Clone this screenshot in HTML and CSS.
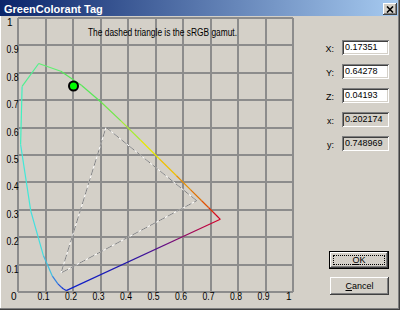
FILE: index.html
```html
<!DOCTYPE html>
<html lang="en">
<head>
    <meta charset="UTF-8">
    <title>GreenColorant Tag</title>
    <link rel="stylesheet" href="styles.css">
</head>
<body>
    <div class="window">
        <div class="titlebar">
            <span class="title">GreenColorant Tag</span>
            <span class="close">
                <svg width="8" height="7" viewBox="0 0 8 7"><path d="M1 0.5L7 6.5M7 0.5L1 6.5" stroke="#000" stroke-width="1.6"/></svg>
            </span>
        </div>
        <div class="client">
            <svg class="chart" viewBox="0 16 300 292" xmlns="http://www.w3.org/2000/svg">
                <defs>
                    <linearGradient id="purple" gradientUnits="userSpaceOnUse" x1="66" y1="290" x2="220" y2="219">
                        <stop offset="0" stop-color="#0a20d0"/>
                        <stop offset="0.4" stop-color="#2418a8"/>
                        <stop offset="0.6" stop-color="#58108c"/>
                        <stop offset="0.82" stop-color="#a00858"/>
                        <stop offset="1" stop-color="#d80028"/>
                    </linearGradient>
                </defs>

                <!-- grid -->
                <path class="grid" d="M18 18V292M45.5 18V292M73 18V292M100.5 18V292M128 18V292M155.5 18V292M183 18V292M210.5 18V292M238 18V292M265.5 18V292M293 18V292M18 18H293M18 45.4H293M18 72.8H293M18 100.2H293M18 127.6H293M18 155H293M18 182.4H293M18 209.8H293M18 237.2H293M18 264.6H293M18 292H293"/>

                <!-- axis labels -->
                <g class="axis">
                    <text x="7" y="26">1</text>
                    <text x="6.5" y="53.4" textLength="12" lengthAdjust="spacingAndGlyphs">0.9</text>
                    <text x="6.5" y="80.8" textLength="12" lengthAdjust="spacingAndGlyphs">0.8</text>
                    <text x="6.5" y="108.2" textLength="12" lengthAdjust="spacingAndGlyphs">0.7</text>
                    <text x="6.5" y="135.6" textLength="12" lengthAdjust="spacingAndGlyphs">0.6</text>
                    <text x="6.5" y="163" textLength="12" lengthAdjust="spacingAndGlyphs">0.5</text>
                    <text x="6.5" y="190.4" textLength="12" lengthAdjust="spacingAndGlyphs">0.4</text>
                    <text x="6.5" y="217.8" textLength="12" lengthAdjust="spacingAndGlyphs">0.3</text>
                    <text x="6.5" y="245.2" textLength="12" lengthAdjust="spacingAndGlyphs">0.2</text>
                    <text x="6.5" y="272.6" textLength="12" lengthAdjust="spacingAndGlyphs">0.1</text>
                    <text x="11" y="299.5">0</text>
                    <text x="37.5" y="299.5" textLength="12" lengthAdjust="spacingAndGlyphs">0.1</text>
                    <text x="65" y="299.5" textLength="12" lengthAdjust="spacingAndGlyphs">0.2</text>
                    <text x="92.5" y="299.5" textLength="12" lengthAdjust="spacingAndGlyphs">0.3</text>
                    <text x="120" y="299.5" textLength="12" lengthAdjust="spacingAndGlyphs">0.4</text>
                    <text x="147.5" y="299.5" textLength="12" lengthAdjust="spacingAndGlyphs">0.5</text>
                    <text x="175" y="299.5" textLength="12" lengthAdjust="spacingAndGlyphs">0.6</text>
                    <text x="202.5" y="299.5" textLength="12" lengthAdjust="spacingAndGlyphs">0.7</text>
                    <text x="230" y="299.5" textLength="12" lengthAdjust="spacingAndGlyphs">0.8</text>
                    <text x="257.5" y="299.5" textLength="12" lengthAdjust="spacingAndGlyphs">0.9</text>
                    <text x="286" y="299.5">1</text>
                </g>

                <text class="caption" x="88" y="36" textLength="149" lengthAdjust="spacingAndGlyphs">The dashed triangle is the sRGB gamut.</text>

                <!-- sRGB gamut -->
                <polygon class="gamut-base" points="196.7,200.7 106,127.3 61,273"/>
                <polygon class="gamut-dash" points="196.7,200.7 106,127.3 61,273"/>

                <!-- spectral locus, 10nm steps -->
                <g class="locus">
                    <line x1="66.2" y1="290.6" x2="63.5" y2="289" stroke="#1030d0"/>
                    <line x1="63.5" y1="289" x2="61.4" y2="287.2" stroke="#1030d0"/>
                    <line x1="61.4" y1="287.2" x2="57.9" y2="283.9" stroke="#2050d8"/>
                    <line x1="57.9" y1="283.9" x2="52.4" y2="276.2" stroke="#3080e0"/>
                    <line x1="52.4" y1="276.2" x2="43.4" y2="255.6" stroke="#40c0e0"/>
                    <line x1="43.4" y1="255.6" x2="30.8" y2="211.2" stroke="#40e0e0"/>
                    <line x1="30.8" y1="211.2" x2="20.6" y2="144.5" stroke="#40e8d8"/>
                    <line x1="20.6" y1="144.5" x2="22.1" y2="86.4" stroke="#40f0c0"/>
                    <line x1="22.1" y1="86.4" x2="38.7" y2="63.5" stroke="#50f090"/>
                    <line x1="38.7" y1="63.5" x2="60.8" y2="71.2" stroke="#60f070"/>
                    <line x1="60.8" y1="71.2" x2="81.4" y2="85.3" stroke="#58e858"/>
                    <line x1="81.4" y1="85.3" x2="101.2" y2="102.3" stroke="#58e858"/>
                    <line x1="101.2" y1="102.3" x2="120.9" y2="120.9" stroke="#70e848"/>
                    <line x1="120.9" y1="120.9" x2="140.4" y2="140" stroke="#a8ec30"/>
                    <line x1="140.4" y1="140" x2="159.2" y2="158.7" stroke="#e8e800"/>
                    <line x1="159.2" y1="158.7" x2="176.5" y2="175.8" stroke="#f0c000"/>
                    <line x1="176.5" y1="175.8" x2="190.7" y2="189.9" stroke="#e89000"/>
                    <line x1="190.7" y1="189.9" x2="201.4" y2="200.5" stroke="#e07000"/>
                    <line x1="201.4" y1="200.5" x2="208.5" y2="207.5" stroke="#e05000"/>
                    <line x1="208.5" y1="207.5" x2="213" y2="212" stroke="#e03000"/>
                    <line x1="213" y1="212" x2="216" y2="215" stroke="#d81020"/>
                    <line x1="216" y1="215" x2="220.3" y2="219.3" stroke="#d00020"/>
                    <line x1="220.3" y1="219.3" x2="66.2" y2="290.6" stroke="url(#purple)"/>
                </g>

                <circle class="point" cx="73.5" cy="86" r="4.5"/>
            </svg>

            <div class="side">
                <div class="fields">
                    <span class="label">X:</span><span class="field">0.17351</span>
                    <span class="label">Y:</span><span class="field">0.64278</span>
                    <span class="label">Z:</span><span class="field">0.04193</span>
                    <span class="label">x:</span><span class="field readonly">0.202174</span>
                    <span class="label">y:</span><span class="field readonly">0.748969</span>
                </div>
                <div class="buttons">
                    <button class="btn default"><u>O</u>K</button>
                    <button class="btn cancel"><u>C</u>ancel</button>
                </div>
            </div>
        </div>
    </div>
</body>
</html>
```

FILE: styles.css
```css
* {
    box-sizing: border-box;
}

body {
    margin: 0;
    font-family: "Liberation Sans", Arial, sans-serif;
    font-size: 9px;
    color: #000;
}

.window {
    width: 400px;
    height: 310px;
    background-color: #d4d0c8;
    display: flex;
    flex-direction: column;
    padding: 0 2px 2px 0;
    box-shadow: inset -1px -1px #404040, inset -2px -2px #808080, inset 1px 0 #fff;
}

.titlebar {
    height: 16px;
    flex: none;
    display: flex;
    justify-content: space-between;
    align-items: center;
    padding: 1px 1px 0 4px;
    background: linear-gradient(to right, #0a246a, #a6caf0);
}

.title {
    color: #fff;
    font: bold 11px "Liberation Sans", Arial, sans-serif;
}

.close {
    width: 14px;
    height: 12px;
    align-self: flex-end;
    margin-bottom: 1px;
    display: flex;
    justify-content: center;
    align-items: center;
    background-color: #d4d0c8;
    box-shadow: inset -1px -1px #404040, inset 1px 1px #fff, inset -2px -2px #808080;
}

.close svg {
    display: block;
}

.client {
    flex: 1;
    display: flex;
}

.chart {
    display: block;
    width: 300px;
    height: 292px;
    flex: none;
}

.grid {
    fill: none;
    stroke: #8c8c8c;
    stroke-width: 2;
    shape-rendering: crispEdges;
}

.axis text,
.caption {
    font-family: "Liberation Sans", Arial, sans-serif;
    font-size: 10px;
    fill: #000;
}

.gamut-base {
    fill: none;
    stroke: #fff;
    stroke-width: 1;
}

.gamut-dash {
    fill: none;
    stroke: #808080;
    stroke-width: 1;
    stroke-dasharray: 7 3;
}

.locus line {
    stroke-width: 1.2;
}

.point {
    fill: #00ff00;
    stroke: #000;
    stroke-width: 2;
}

.side {
    flex: 1;
    display: flex;
    flex-direction: column;
    padding: 24px 0 0 26px;
}

.fields {
    display: grid;
    grid-template-columns: 8px 47px;
    column-gap: 8px;
    row-gap: 7px;
}

.label {
    justify-self: end;
    white-space: nowrap;
    line-height: 15px;
    padding-top: 2px;
}

.field {
    height: 15px;
    line-height: 15px;
    padding-left: 3px;
    background-color: #fff;
    box-shadow: inset 1px 1px #808080, inset -1px -1px #fff, inset 2px 2px #404040, inset -2px -2px #d4d0c8;
}

.field.readonly {
    background-color: #d4d0c8;
}

.buttons {
    margin-top: 98px;
    padding-left: 3px;
    display: flex;
    flex-direction: column;
    gap: 8px;
}

.btn {
    position: relative;
    width: 60px;
    height: 18px;
    padding: 0;
    border: none;
    font: inherit;
    color: #000;
    background-color: #d4d0c8;
    box-shadow: inset -1px -1px #404040, inset 1px 1px #fff, inset -2px -2px #808080;
}

.btn.default {
    border: 1px solid #000;
}

.btn.default::after {
    content: "";
    position: absolute;
    inset: 3px;
    border: 1px dotted #000;
}

.btn.cancel {
    width: 59px;
    margin-left: 1px;
}
```
